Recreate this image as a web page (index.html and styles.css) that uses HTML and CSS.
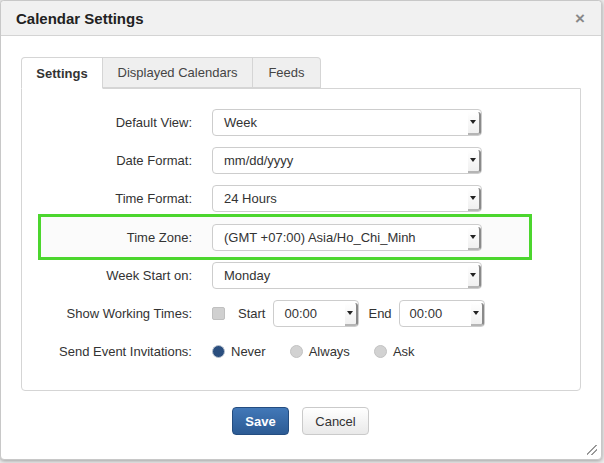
FILE: index.html
```html
<!DOCTYPE html>
<html>
<head>
<meta charset="utf-8">
<link rel="stylesheet" href="styles.css">
</head>
<body>
<div class="dialog">
  <div class="header">
    <span class="title">Calendar Settings</span>
    <span class="close">&times;</span>
  </div>
  <div class="body">
    <div class="tabs">
      <div class="tab active">Settings</div>
      <div class="tab">Displayed Calendars</div>
      <div class="tab">Feeds</div>
    </div>
    <div class="pane">
      <div class="form">
        <div class="row">
          <label class="lbl">Default View:</label>
          <div class="select"><span>Week</span><i class="arrow"></i></div>
        </div>
        <div class="row">
          <label class="lbl">Date Format:</label>
          <div class="select"><span>mm/dd/yyyy</span><i class="arrow"></i></div>
        </div>
        <div class="row">
          <label class="lbl">Time Format:</label>
          <div class="select"><span>24 Hours</span><i class="arrow"></i></div>
        </div>
        <div class="row highlight">
          <label class="lbl">Time Zone:</label>
          <div class="select"><span>(GMT +07:00) Asia/Ho_Chi_Minh</span><i class="arrow"></i></div>
        </div>
        <div class="row">
          <label class="lbl">Week Start on:</label>
          <div class="select"><span>Monday</span><i class="arrow"></i></div>
        </div>
        <div class="row">
          <label class="lbl">Show Working Times:</label>
          <div class="inline">
            <span class="checkbox"></span>
            <span class="word start">Start</span>
            <div class="select small"><span>00:00</span><i class="arrow"></i></div>
            <span class="word end">End</span>
            <div class="select small end-sel"><span>00:00</span><i class="arrow"></i></div>
          </div>
        </div>
        <div class="row">
          <label class="lbl">Send Event Invitations:</label>
          <div class="inline">
            <span class="radio on"></span><span class="rtext">Never</span>
            <span class="radio"></span><span class="rtext">Always</span>
            <span class="radio"></span><span class="rtext">Ask</span>
          </div>
        </div>
      </div>
    </div>
  </div>
  <div class="footer">
    <button class="btn primary">Save</button>
    <button class="btn">Cancel</button>
  </div>
  <span class="grip"></span>
</div>
</body>
</html>
```
FILE: styles.css
```css
html, body {
  margin: 0;
  padding: 0;
}
body {
  background: #eeeeee;
  width: 604px;
  height: 463px;
  overflow: hidden;
  font-family: "Liberation Sans", Arial, sans-serif;
  font-size: 13px;
  color: #333;
}
.dialog {
  position: relative;
  width: 602px;
  height: 460px;
  box-sizing: border-box;
  border: 1px solid #c8c8c8;
  border-radius: 4px;
  background: #fff;
  box-shadow: 0 1px 4px rgba(0,0,0,0.35);
  display: flex;
  flex-direction: column;
}
.header {
  height: 34px;
  background: #f1f1f1;
  border-bottom: 1px solid #d4d4d4;
  border-radius: 4px 4px 0 0;
  display: flex;
  align-items: center;
  justify-content: space-between;
  padding: 0 16px 0 15px;
}
.title {
  font-weight: bold;
  font-size: 15px;
  color: #222;
}
.close {
  font-size: 17px;
  font-weight: bold;
  color: #888;
  line-height: 1;
  margin-top: 1px;
}
.body {
  padding: 21px 20px 0 20px;
}
.tabs {
  display: flex;
  height: 31px;
  position: relative;
  z-index: 1;
}
.tab {
  box-sizing: border-box;
  height: 31px;
  border: 1px solid #d5d5d5;
  border-left: none;
  background: #efefef;
  display: flex;
  align-items: center;
  justify-content: center;
  color: #444;
}
.tab:nth-child(2) { width: 150px; }
.tab:nth-child(3) { width: 68px; border-radius: 0 4px 0 0; }
.tab.active {
  width: 82px;
  background: #fff;
  border-left: 1px solid #d5d5d5;
  border-bottom: 1px solid #fff;
  border-radius: 4px 0 0 0;
  font-weight: bold;
  color: #333;
  height: 32px;
}
.pane {
  height: 303px;
  box-sizing: border-box;
  border: 1px solid #d5d5d5;
  border-radius: 0 0 4px 4px;
  width: 560px;
}
.form {
  padding-top: 20px;
  display: flex;
  flex-direction: column;
  gap: 11.2px;
}
.row {
  display: flex;
  align-items: center;
  height: 27px;
}
.lbl {
  width: 170px;
  text-align: right;
  margin-right: 20px;
  color: #333;
}
.highlight {
  width: 494px;
  height: auto;
  box-sizing: border-box;
  margin: -10px 0 -9px 16px;
  border: 3px solid #4cd62e;
  padding: 7px 0 6px 0;
  background: #fbfbfb;
}
.highlight .lbl {
  width: 151px;
}
.select {
  position: relative;
  box-sizing: border-box;
  width: 270px;
  height: 27px;
  border: 1px solid #cdcdcd;
  border-radius: 4px;
  background: #fff;
  display: flex;
  align-items: center;
  padding-left: 11px;
  color: #333;
}
.arrow {
  position: absolute;
  right: 0;
  top: 2px;
  bottom: 0;
  width: 11px;
  border-right: 2px solid #8a8a8a;
  border-bottom: 2px solid #b5b5b5;
  border-radius: 0 3px 3px 0;
  background: linear-gradient(#ffffff, #f0f0f0);
}
.arrow::after {
  content: "";
  position: absolute;
  left: 2px;
  top: 8px;
  border-left: 3px solid transparent;
  border-right: 3px solid transparent;
  border-top: 4px solid #222;
}
.inline {
  display: flex;
  align-items: center;
}
.checkbox {
  width: 11px;
  height: 11px;
  border: 1px solid #c0c0c0;
  border-radius: 2px;
  background: #d0d0d0;
}
.word.start { margin-left: 13px; margin-right: 8px; }
.word.end { margin-left: 9px; margin-right: 7px; }
.select.small {
  width: 86px;
  padding-left: 10px;
}
.select.small.end-sel { width: 86px; }
.radio {
  width: 11px;
  height: 11px;
  border-radius: 50%;
  border: 1px solid #c2c2c2;
  background: #d2d2d2;
}
.radio.on {
  background: #2a4e7e;
  border-color: #b8c2cf;
}
.rtext {
  margin-left: 6px;
  margin-right: 24px;
}
.footer {
  display: flex;
  justify-content: center;
  gap: 13px;
  padding-top: 16px;
  padding-right: 1px;
}
.btn {
  font-family: "Liberation Sans", Arial, sans-serif;
  font-size: 13px;
  height: 28px;
  padding: 0 12px;
  border-radius: 4px;
  border: 1px solid #cacaca;
  background: linear-gradient(#ffffff, #e9e9e9);
  color: #333;
  width: 67px;
}
.btn.primary {
  width: 57px;
  border-color: #244d80;
  background: linear-gradient(#4278b8, #2c5b94);
  color: #fff;
  font-weight: bold;
}
.grip {
  position: absolute;
  right: 4px;
  bottom: 4px;
  width: 10px;
  height: 10px;
  background: linear-gradient(135deg, transparent 45%, #999 45%, #999 53%, transparent 53%, transparent 70%, #999 70%, #999 78%, transparent 78%);
}
```
